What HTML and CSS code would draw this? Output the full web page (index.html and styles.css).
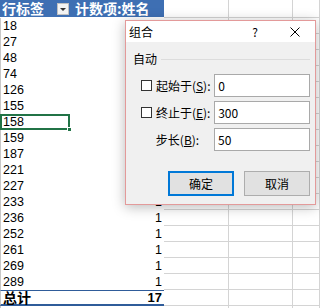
FILE: index.html
```html
<!DOCTYPE html>
<html lang="zh-CN">
<head>
    <meta charset="UTF-8">
    <title>数据透视表 - 组合</title>
    <link rel="stylesheet" href="styles.css">
</head>
<body>
    <div class="sheet">
        <!-- Pivot table header -->
        <div class="row head-row">
            <div class="cell head head-label">行标签<span class="filter-btn"></span></div>
            <div class="cell head head-count">计数项:姓名</div>
            <div class="cell grid"></div>
            <div class="cell grid"></div>
            <div class="cell grid"></div>
        </div>

        <div class="row"><div class="cell key">18</div><div class="cell num">1</div><div class="cell grid"></div><div class="cell grid"></div><div class="cell grid"></div></div>
        <div class="row"><div class="cell key">27</div><div class="cell num">1</div><div class="cell grid"></div><div class="cell grid"></div><div class="cell grid"></div></div>
        <div class="row"><div class="cell key">48</div><div class="cell num">1</div><div class="cell grid"></div><div class="cell grid"></div><div class="cell grid"></div></div>
        <div class="row"><div class="cell key">74</div><div class="cell num">1</div><div class="cell grid"></div><div class="cell grid"></div><div class="cell grid"></div></div>
        <div class="row"><div class="cell key">126</div><div class="cell num">1</div><div class="cell grid"></div><div class="cell grid"></div><div class="cell grid"></div></div>
        <div class="row"><div class="cell key">155</div><div class="cell num">1</div><div class="cell grid"></div><div class="cell grid"></div><div class="cell grid"></div></div>
        <div class="row"><div class="cell key selected">158</div><div class="cell num">1</div><div class="cell grid"></div><div class="cell grid"></div><div class="cell grid"></div></div>
        <div class="row"><div class="cell key">159</div><div class="cell num">1</div><div class="cell grid"></div><div class="cell grid"></div><div class="cell grid"></div></div>
        <div class="row"><div class="cell key">187</div><div class="cell num">1</div><div class="cell grid"></div><div class="cell grid"></div><div class="cell grid"></div></div>
        <div class="row"><div class="cell key">221</div><div class="cell num">1</div><div class="cell grid"></div><div class="cell grid"></div><div class="cell grid"></div></div>
        <div class="row"><div class="cell key">227</div><div class="cell num">1</div><div class="cell grid"></div><div class="cell grid"></div><div class="cell grid"></div></div>
        <div class="row"><div class="cell key">233</div><div class="cell num">1</div><div class="cell grid"></div><div class="cell grid"></div><div class="cell grid"></div></div>
        <div class="row"><div class="cell key">236</div><div class="cell num">1</div><div class="cell grid"></div><div class="cell grid"></div><div class="cell grid"></div></div>
        <div class="row"><div class="cell key">252</div><div class="cell num">1</div><div class="cell grid"></div><div class="cell grid"></div><div class="cell grid"></div></div>
        <div class="row"><div class="cell key">261</div><div class="cell num">1</div><div class="cell grid"></div><div class="cell grid"></div><div class="cell grid"></div></div>
        <div class="row"><div class="cell key">269</div><div class="cell num">1</div><div class="cell grid"></div><div class="cell grid"></div><div class="cell grid"></div></div>
        <div class="row"><div class="cell key">289</div><div class="cell num">1</div><div class="cell grid"></div><div class="cell grid"></div><div class="cell grid"></div></div>

        <!-- Grand total -->
        <div class="row">
            <div class="cell key total total-label">总计</div>
            <div class="cell num total">17</div>
            <div class="cell grid"></div>
            <div class="cell grid"></div>
            <div class="cell grid"></div>
        </div>
        <div class="row"><div class="cell key"></div><div class="cell"></div><div class="cell grid"></div><div class="cell grid"></div><div class="cell grid"></div></div>

        <!-- Grouping dialog -->
        <div class="dialog">
            <div class="dlg-title">
                <span class="dlg-name">组合</span>
                <span class="dlg-help">?</span>
                <span class="dlg-close">
                    <svg width="10" height="10" viewBox="0 0 10 10">
                        <path d="M0.5 0.5 L9.5 9.5 M9.5 0.5 L0.5 9.5" stroke="#000" stroke-width="1" fill="none"/>
                    </svg>
                </span>
            </div>
            <div class="dlg-body">
                <div class="group-head">
                    <span>自动</span>
                    <span class="group-line"></span>
                </div>
                <div class="field">
                    <span class="check"></span>
                    <span class="field-label">起始于(<u>S</u>):</span>
                    <span class="text-box">0</span>
                </div>
                <div class="field">
                    <span class="check"></span>
                    <span class="field-label">终止于(<u>E</u>):</span>
                    <span class="text-box">300</span>
                </div>
                <div class="field">
                    <span class="check-space"></span>
                    <span class="field-label">步长(<u>B</u>):</span>
                    <span class="text-box">50</span>
                </div>
                <div class="buttons">
                    <button class="btn btn-default">确定</button>
                    <button class="btn">取消</button>
                </div>
            </div>
        </div>
    </div>
</body>
</html>
```

FILE: styles.css
```css
body {
    margin: 0;
    font-family: "Liberation Sans", "Noto Sans CJK SC", sans-serif;
    font-size: 12.5px;
    color: #000;
    background: #fff;
    overflow: hidden;
}

.sheet {
    position: relative;
    width: 320px;
    height: 308px;
}

.row {
    display: grid;
    grid-template-columns: 70px 94px 65px 64px 1fr;
    height: 16px;
}

.cell {
    box-sizing: border-box;
    height: 16px;
    line-height: 16px;
    padding: 0 2px;
    white-space: nowrap;
    overflow: hidden;
}

.grid {
    border-right: 1px solid #d4d4d4;
    border-bottom: 1px solid #d4d4d4;
}

.key {
    border-left: 1px solid #c8c8c8;
}

.num {
    text-align: right;
}

/* header */
.head-row {
    height: 18px;
}

.head-row .cell {
    height: 18px;
}

.head {
    background: #3e6fb3;
    color: #fff;
    font-family: "Noto Sans CJK SC", sans-serif;
    font-weight: bold;
    font-size: 14px;
    line-height: 17px;
    border-bottom: 1px solid #fff;
    overflow: visible;
}

.head-label {
    display: flex;
    justify-content: space-between;
    align-items: center;
    padding: 0 1px 0 2px;
}

.head-count {
    padding-left: 5px;
}

.filter-btn {
    position: relative;
    box-sizing: border-box;
    width: 12px;
    height: 12px;
    background: #f3f3f3;
    border: 1px solid #c0c0c0;
}

.filter-btn::after {
    content: "";
    position: absolute;
    left: 2px;
    top: 4px;
    border-left: 3px solid transparent;
    border-right: 3px solid transparent;
    border-top: 3px solid #333;
}

/* selected cell */
.selected {
    position: relative;
    overflow: visible;
    outline: 2px solid #217346;
    outline-offset: -2px;
}

.selected::after {
    content: "";
    position: absolute;
    right: -2px;
    bottom: -2px;
    width: 5px;
    height: 5px;
    background: #217346;
    border: 1px solid #fff;
    box-sizing: border-box;
}

/* total row */
.total {
    font-weight: bold;
    font-size: 13px;
    line-height: 13px;
    overflow: visible;
    border-top: 1px solid #2f5c9a;
    border-bottom: 2px solid #2f5c9a;
}

.total-label {
    font-family: "Noto Sans CJK SC", sans-serif;
    font-size: 14px;
}

/* dialog */
.dialog {
    position: absolute;
    left: 125px;
    top: 20px;
    width: 191px;
    height: 185px;
    box-sizing: border-box;
    border: 1px solid #e39a9a;
    background: #f0f0f0;
    box-shadow: 0 2px 12px rgba(0, 0, 0, 0.28);
    font-family: "Noto Sans CJK SC", sans-serif;
    font-size: 12px;
}

.dlg-title {
    display: flex;
    align-items: center;
    height: 21px;
    background: #fff;
}

.dlg-name {
    flex: 1;
    padding-left: 3px;
}

.dlg-help {
    width: 40px;
    text-align: center;
}

.dlg-close {
    width: 40px;
    display: flex;
    justify-content: center;
    align-items: center;
}

.dlg-body {
    padding: 10px 5px 0 7px;
}

.group-head {
    display: flex;
    align-items: center;
    gap: 4px;
    height: 14px;
    line-height: 14px;
}

.group-line {
    flex: 1;
    height: 1px;
    background: #dcdcdc;
}

.field {
    display: flex;
    align-items: center;
    height: 23px;
    margin-top: 4px;
    padding-left: 8px;
}

.group-head + .field {
    margin-top: 8px;
}

.check {
    box-sizing: border-box;
    width: 11px;
    height: 11px;
    background: #fff;
    border: 1px solid #333;
    margin-right: 4px;
}

.check-space {
    width: 15px;
}

.field-label {
    width: 59px;
}

.text-box {
    box-sizing: border-box;
    width: 97px;
    height: 23px;
    line-height: 21px;
    padding-left: 3px;
    background: #fff;
    border: 1px solid #a9a9a9;
}

.buttons {
    display: flex;
    justify-content: flex-end;
    gap: 10px;
    margin-top: 20px;
}

.btn {
    box-sizing: border-box;
    width: 66px;
    height: 25px;
    padding: 0;
    font-family: "Noto Sans CJK SC", sans-serif;
    font-size: 12px;
    color: #000;
    background: #e1e1e1;
    border: 1px solid #adadad;
}

.btn-default {
    border-color: #0078d7;
    box-shadow: inset 0 0 0 1px #0078d7;
}
```
